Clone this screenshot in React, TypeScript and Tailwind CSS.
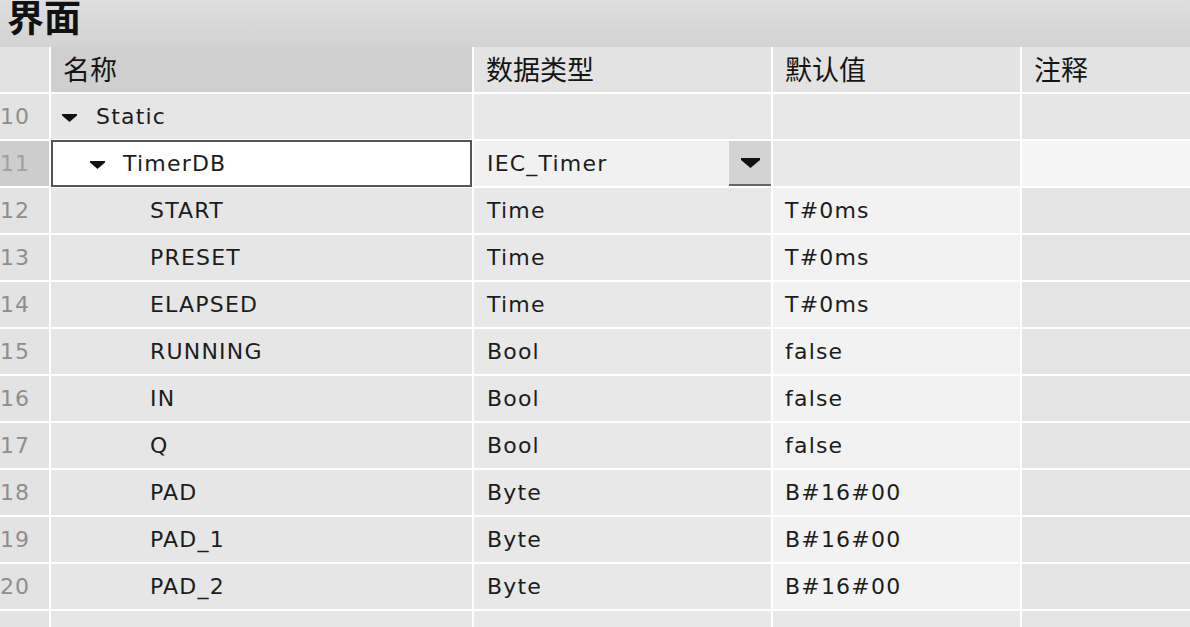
import React from "react";

const Tri = ({ className = "" }: { className?: string }) => (
  <svg width="15" height="8" viewBox="0 0 15 8" className={className}>
    <path d="M0 0 H15 V1.5 L7.5 8 L0 1.5 Z" fill="#111" />
  </svg>
);

type Row = { n: number; name: string; type: string; def: string };

const rows: Row[] = [
  { n: 12, name: "START", type: "Time", def: "T#0ms" },
  { n: 13, name: "PRESET", type: "Time", def: "T#0ms" },
  { n: 14, name: "ELAPSED", type: "Time", def: "T#0ms" },
  { n: 15, name: "RUNNING", type: "Bool", def: "false" },
  { n: 16, name: "IN", type: "Bool", def: "false" },
  { n: 17, name: "Q", type: "Bool", def: "false" },
  { n: 18, name: "PAD", type: "Byte", def: "B#16#00" },
  { n: 19, name: "PAD_1", type: "Byte", def: "B#16#00" },
  { n: 20, name: "PAD_2", type: "Byte", def: "B#16#00" },
];

const grid = "grid grid-cols-[49px_421px_297px_247px_1fr] gap-x-[2px]";
const txt = "font-['DejaVu_Sans',sans-serif] text-[22px] tracking-[1.2px] text-[#1c1c1c]";
const num = "font-['DejaVu_Sans',sans-serif] text-[22px] tracking-[1px] text-[#8e8e8e] flex items-center pl-0";

export default function App() {
  return (
    <div className="w-[1190px] h-[627px] overflow-hidden bg-white">
      <div className="h-[47px] flex items-start overflow-hidden bg-gradient-to-b from-[#dedede] to-[#d3d3d3] pl-[7px]">
        <div className="font-['Noto_Sans_CJK_SC',sans-serif] font-bold text-[37px] leading-none -mt-[2px] text-[#111]">
          界面
        </div>
      </div>
      <div className="flex flex-col gap-y-[2px]">
        {/* header */}
        <div className={`${grid} h-[45px]`}>
          <div className="bg-[#e2e2e2]" />
          {["名称", "数据类型", "默认值", "注释"].map((h, i) => (
            <div
              key={h}
              className={`flex items-center pl-[12px] font-['Noto_Sans_CJK_SC',sans-serif] text-[27px] text-[#151515] ${
                i === 0 ? "bg-[#cfcfcf]" : "bg-[#e3e3e3]"
              }`}
            >
              {h}
            </div>
          ))}
        </div>
        {/* row 10 */}
        <div className={`${grid} h-[45px]`}>
          <div className={`${num} bg-[#e3e3e3]`}>10</div>
          <div className={`${txt} bg-[#e6e6e6] flex items-center pl-[11px]`}>
            <Tri className="mr-[19px] mt-[2px]" />
            Static
          </div>
          <div className="bg-[#e8e8e8]" />
          <div className="bg-[#e8e8e8]" />
          <div className="bg-[#e6e6e6]" />
        </div>
        {/* row 11 */}
        <div className={`${grid} h-[45px]`}>
          <div className={`${num} bg-[#cdcdcd] text-[#a0a0a0]`}>11</div>
          <div className={`${txt} bg-white border-2 border-[#555] -mt-[1px] -mb-[1px] flex items-center pl-[37px]`}>
            <Tri className="mr-[18px] mt-[2px]" />
            TimerDB
          </div>
          <div className={`${txt} bg-[#f1f1f1] flex items-center`}>
            <div className="flex-1 pl-[13px]">IEC_Timer</div>
            <div className="w-[42px] h-full bg-[#d3d3d3] border-b-2 border-[#666] flex items-center justify-center">
              <svg width="19" height="10" viewBox="0 0 19 10">
                <path d="M0 0 H19 V2 L9.5 10 L0 2 Z" fill="#111" />
              </svg>
            </div>
          </div>
          <div className="bg-[#e9e9e9]" />
          <div className="bg-[#f5f5f5]" />
        </div>
        {rows.map((r) => (
          <div key={r.n} className={`${grid} h-[45px]`}>
            <div className={`${num} bg-[#e3e3e3]`}>{r.n}</div>
            <div className={`${txt} bg-[#e6e6e6] flex items-center pl-[99px]`}>{r.name}</div>
            <div className={`${txt} bg-[#e8e8e8] flex items-center pl-[13px]`}>{r.type}</div>
            <div className={`${txt} bg-[#f2f2f2] flex items-center pl-[12px]`}>{r.def}</div>
            <div className="bg-[#e4e4e4]" />
          </div>
        ))}
        <div className={`${grid} h-[45px]`}>
          <div className="bg-[#e3e3e3]" />
          <div className="bg-[#e6e6e6]" />
          <div className="bg-[#e8e8e8]" />
          <div className="bg-[#e8e8e8]" />
          <div className="bg-[#e4e4e4]" />
        </div>
      </div>
    </div>
  );
}
